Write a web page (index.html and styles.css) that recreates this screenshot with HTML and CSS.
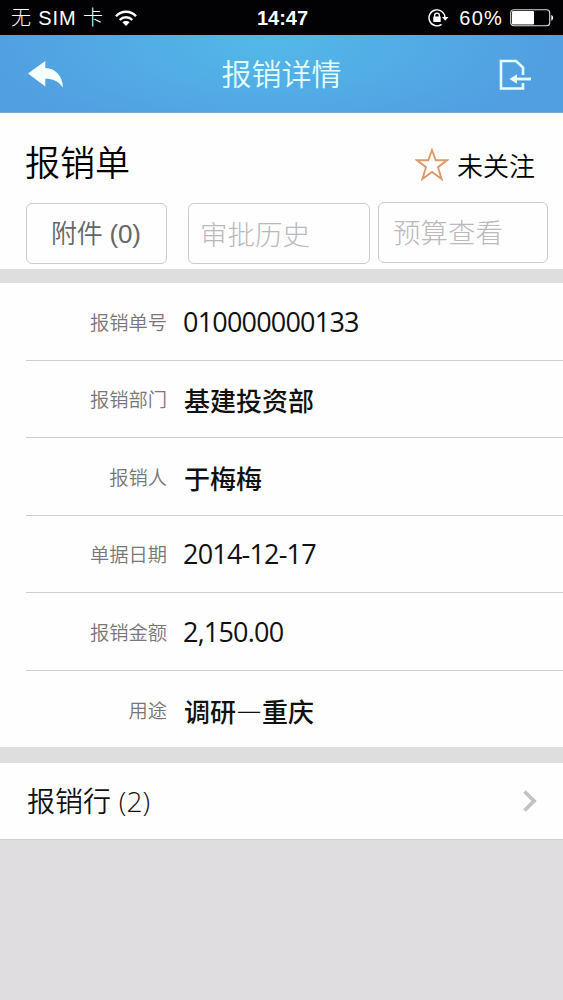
FILE: index.html
```html
<!DOCTYPE html>
<html lang="zh-CN">
<head>
  <meta charset="UTF-8">
  <meta name="viewport" content="width=device-width, initial-scale=1.0">
  <title>报销详情</title>
  <link rel="stylesheet" href="styles.css">
</head>
<body>
    <div class="status-bar">
        <div class="status-left">
            <span class="carrier">无 SIM 卡</span>
            <svg class="wifi" width="22" height="17" viewBox="0 0 22 17" fill="none" stroke="#fff" stroke-width="2.4">
                <path d="M1 6.2C6.5.3 15.5.3 21 6.2"/>
                <path d="M4.700 10C8.300 6.300 13.700 6.300 17.300 10"/>
                <path d="M11 16L7.400 12.300C9.400 10.500 12.600 10.500 14.600 12.300Z" fill="#fff" stroke="none"/>
            </svg>
        </div>
        <span class="time">14:47</span>
        <div class="status-right">
            <svg class="lock" width="21" height="18" viewBox="0 0 21 18">
                <path d="M17 9A8 8 0 1 0 13.6 15.4" fill="none" stroke="#fff" stroke-width="1.4"/>
                <path d="M14 8H20.5L17.2 11.8Z" fill="#fff"/>
                <path d="M6.6 8V6.600a2.400 2.400 0 0 1 4.800 0V8" fill="none" stroke="#fff" stroke-width="1.3"/>
                <rect x="5.3" y="7.6" width="7.4" height="5.4" rx="0.6" fill="#fff"/>
            </svg>
            <span class="percent">60%</span>
            <svg class="battery" width="44" height="18" viewBox="0 0 44 18">
                <rect x="0.7" y="0.7" width="39" height="16" rx="3" fill="none" stroke="#ddd" stroke-width="1.1"/>
                <rect x="2" y="2" width="22" height="13.4" rx="1" fill="#fff"/>
                <path d="M41.300 6c2.400.7 2.400 5 0 5.700z" fill="#fff"/>
            </svg>
        </div>
    </div>

    <header class="nav-bar">
        <svg class="back" width="36" height="28" viewBox="0 0 36 28" fill="#f5ffff">
            <path d="M0 12.500L17.300 0V7C27.500 7.500 34.500 14.500 35 26.500C30 20 25 17.800 17.300 17.800V25.500Z"/>
        </svg>
        <h1>报销详情</h1>
        <svg class="export" width="33" height="32" viewBox="0 0 33 32">
            <path d="M24 16V8.500L17 2H2V29.500H24V24" fill="none" stroke="#e6ffff" stroke-width="2.600"/>
            <path d="M17 20H32" stroke="#e6ffff" stroke-width="2.800"/>
            <path d="M10.500 20L18 15.300V24.700Z" fill="#e6ffff"/>
        </svg>
    </header>

    <section class="summary">
        <div class="title-row">
            <h2>报销单</h2>
            <div class="follow">
                <svg width="34" height="33" viewBox="0 0 34 33" fill="none" stroke="#df9867" stroke-width="1.900">
                    <path d="M17 2L20.700 12.300H32L23 19.200L26.600 31L17 24L7.400 31L11 19.200L2 12.300H13.300Z"/>
                </svg>
                <span>未关注</span>
            </div>
        </div>
        <div class="buttons">
            <button class="attach">附件 (0)</button>
            <button class="history">审批历史</button>
            <button class="budget">预算查看</button>
        </div>
    </section>

    <section class="details">
        <div class="row"><span class="label">报销单号</span><span class="value number">010000000133</span></div>
        <div class="row"><span class="label">报销部门</span><span class="value">基建投资部</span></div>
        <div class="row"><span class="label">报销人</span><span class="value">于梅梅</span></div>
        <div class="row"><span class="label">单据日期</span><span class="value number">2014-12-17</span></div>
        <div class="row"><span class="label">报销金额</span><span class="value number">2,150.00</span></div>
        <div class="row"><span class="label">用途</span><span class="value">调研—重庆</span></div>
    </section>

    <section class="lines">
        <span class="lines-title">报销行 <span class="count">(2)</span></span>
        <svg width="16" height="24" viewBox="0 0 16 24" fill="none" stroke="#c4c2c5" stroke-width="3.800">
            <path d="M2.500 2.500L12 12L2.500 21.500"/>
        </svg>
    </section>
</body>
</html>
```

FILE: styles.css
```css
* {
    box-sizing: border-box;
}

body {
    margin: 0;
    min-height: 1000px;
    background-color: #dfdde0;
    font-family: "Liberation Sans", "Noto Sans CJK SC", sans-serif;
    color: #111;
}

h1, h2 {
    margin: 0;
    font-weight: 350;
}

svg {
    display: block;
    flex: none;
}

/* Barra de estado */
.status-bar {
    display: grid;
    grid-template-columns: 1fr auto 1fr;
    align-items: center;
    height: 35px;
    padding: 1px 9px 0 11px;
    background-color: #020104;
    color: #fff;
    font-size: 20px;
    line-height: 34px;
    white-space: nowrap;
}

.status-left, .status-right {
    display: flex;
    align-items: center;
}

.status-right {
    justify-content: flex-end;
}

.carrier {
    font-weight: 300;
    letter-spacing: 0.9px;
}

.wifi {
    margin-left: 11px;
}

.time {
    font-weight: bold;
    letter-spacing: 0;
}

.percent {
    margin: 0 7px 0 10px;
    letter-spacing: 1.2px;
}

.nav-bar {
    display: flex;
    align-items: center;
    justify-content: space-between;
    height: 78px;
    padding: 2px 31px 0 28px;
    border-bottom: 1px solid #7ba5c9;
    background: radial-gradient(ellipse 50% 130% at 48% 10%, #53b8e9, #519fe1);
}

.nav-bar h1 {
    font-size: 30px;
    line-height: 74px;
    color: #e0ffff;
}

/* Cabecera del documento */
.summary {
    height: 156px;
    padding-top: 26px;
    background-color: #fefefe;
}

.title-row {
    display: flex;
    align-items: center;
    justify-content: space-between;
    height: 50px;
    padding: 0 28px 0 25px;
}

.title-row h2 {
    font-size: 35px;
    line-height: 50px;
    color: #000;
}

.follow {
    display: flex;
    align-items: center;
    gap: 8px;
    font-size: 26px;
    font-weight: 350;
    color: #000;
}

.buttons {
    display: flex;
    padding: 14px 15px 0 26px;
}

button {
    height: 61px;
    padding: 0;
    border: 1px solid #cdcbca;
    border-radius: 6px;
    background-color: #fefefe;
    font-family: inherit;
    font-size: 27.5px;
    font-weight: 300;
    color: #bbb9bc;
    text-align: left;
}

.attach {
    width: 141px;
    margin-right: 21px;
    padding: 0 0 4px 24px;
    font-size: 26px;
    font-weight: 350;
    letter-spacing: -0.2px;
    color: #666;
}

.history {
    width: 182px;
    margin-right: 8px;
    padding: 0 0 2px 11px;
}

.budget {
    width: 170px;
    margin-top: -1px;
    padding: 0 0 3px 14px;
}

/* Datos */
.details {
    display: grid;
    grid-template-rows: repeat(6, 77.5px);
    height: 478px;
    border-top: 14px solid #dfdde0;
    background-color: #fefefe;
}

.row {
    display: flex;
    align-items: center;
    margin-left: 26px;
    border-bottom: 1px solid #cfcdd0;
}

.row:last-child {
    border-bottom: none;
}

.label {
    width: 141px;
    margin-right: 17px;
    padding-top: 1px;
    font-size: 19.3px;
    font-weight: 350;
    color: #777;
    text-align: right;
}

.value {
    padding-top: 2px;
    font-family: "Noto Sans CJK SC", sans-serif;
    font-size: 26px;
    font-weight: 500;
}

.number {
    margin-left: -1px;
    padding-top: 0;
    font-family: "Open Sans", sans-serif;
    font-size: 27px;
    font-weight: 400;
    letter-spacing: -0.8px;
}

.lines {
    display: flex;
    align-items: center;
    justify-content: space-between;
    height: 93px;
    padding: 0 25px 0 27px;
    border-top: 16px solid #dfdde0;
    border-bottom: 1px solid #cfcdd0;
    background-color: #fefefe;
}

.lines-title {
    padding-bottom: 3px;
    font-size: 28px;
    font-weight: 350;
}

.count {
    font-family: "Open Sans", sans-serif;
}
```
